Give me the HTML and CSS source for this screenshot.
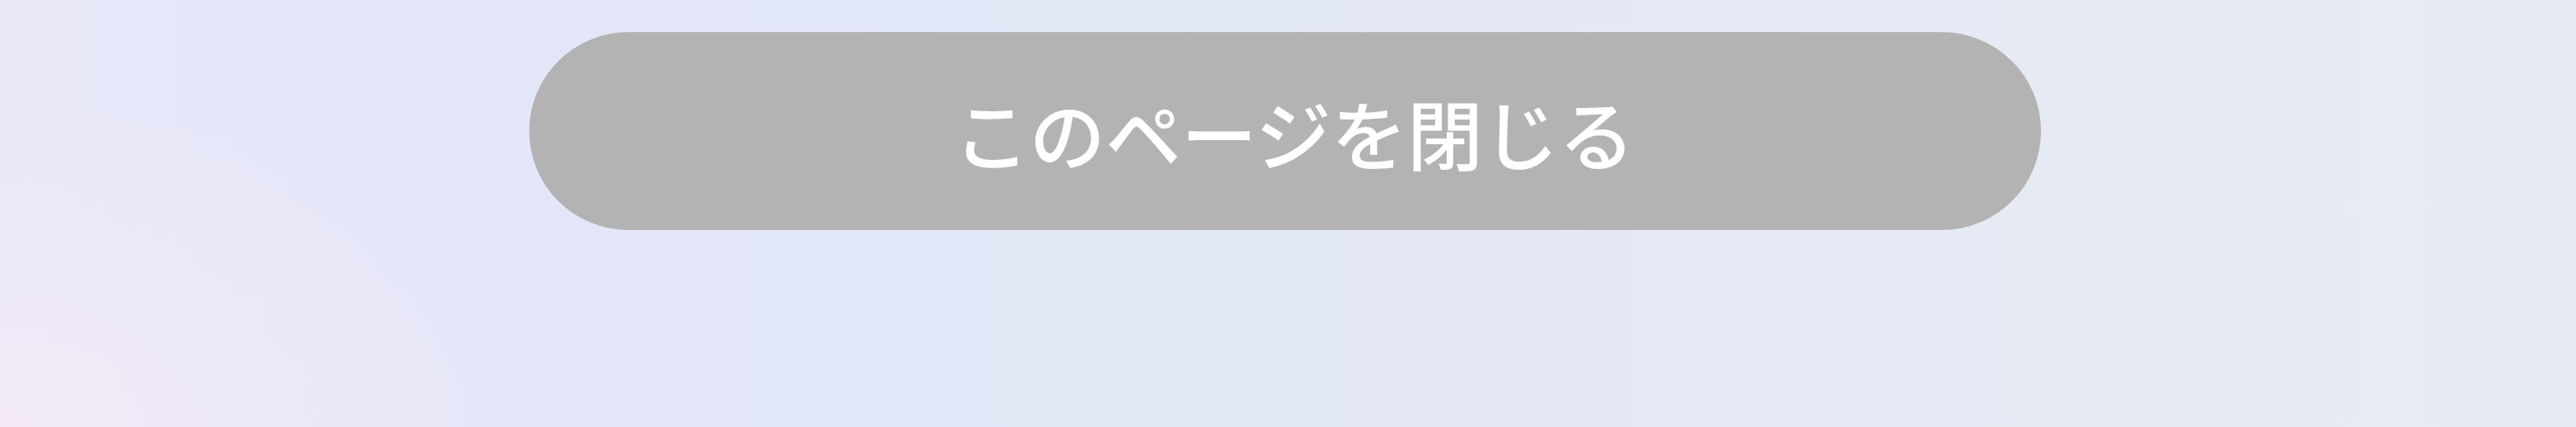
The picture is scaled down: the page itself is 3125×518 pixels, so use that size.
FILE: index.html
```html
<!DOCTYPE html>
<html lang="ja">
<head>
<meta charset="utf-8">
<title>このページを閉じる</title>
<link rel="stylesheet" href="styles.css">
</head>
<body>
<div class="page">
  <button class="close-btn" type="button"><span class="label">このページを閉じる</span></button>
</div>
</body>
</html>
```
FILE: styles.css
```css
html, body {
  margin: 0;
  padding: 0;
  width: 3125px;
  height: 518px;
  overflow: hidden;
}
body {
  font-family: "Noto Sans CJK JP", "Noto Sans", sans-serif;
  background:
    radial-gradient(ellipse 700px 400px at 0% 100%, rgba(244, 234, 246, 0.9), rgba(244, 234, 246, 0) 100%),
    linear-gradient(90deg, #e8e8f8 0%, #e3e6f8 15%, #e2e7f7 35%, #e3e8f4 55%, #e6eaf3 80%, #e7ebf1 100%);
}
.page {
  display: flex;
  padding: 39px 649px 0 642px;
}
.close-btn {
  flex: 1;
  height: 240px;
  border: none;
  border-radius: 120px;
  background: #b3b3b3;
  color: #ffffff;
  font-family: inherit;
  font-size: 92px;
  font-weight: 500;
  display: flex;
  align-items: center;
  justify-content: center;
  padding: 2px 0 0 22px;
  cursor: pointer;
}
.label {
  line-height: 1;
  white-space: nowrap;
}
```
